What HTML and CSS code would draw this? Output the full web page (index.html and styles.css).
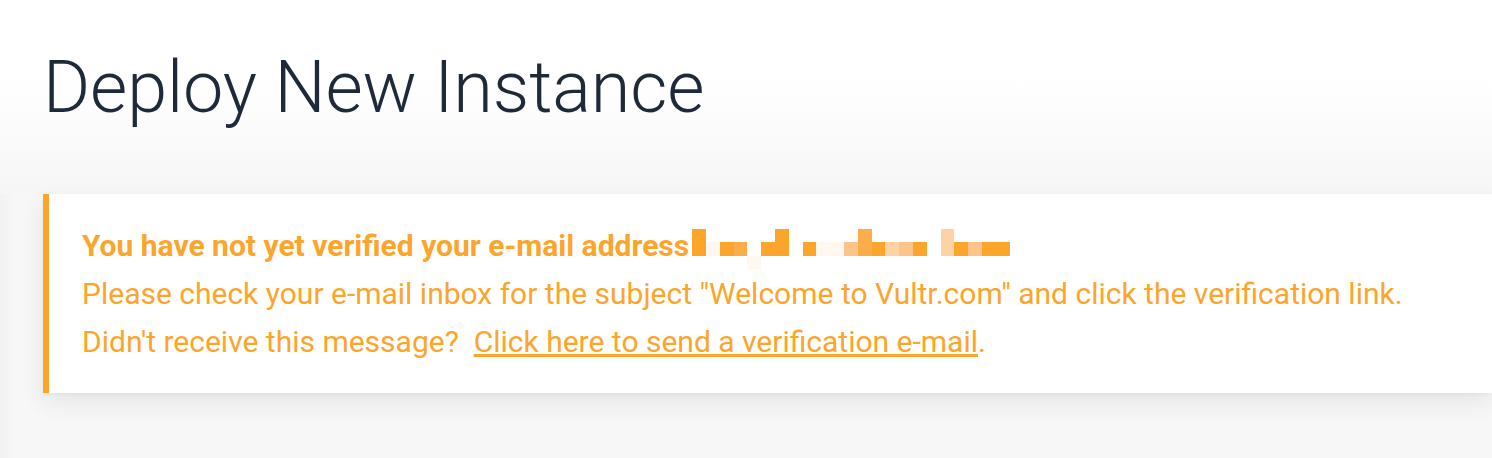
FILE: index.html
```html
<!DOCTYPE html>
<html lang="en">
<head>
<meta charset="utf-8">
<title>Deploy New Instance</title>
<link rel="stylesheet" href="styles.css">
</head>
<body>
  <header class="page-head">
    <h1 class="page-title">Deploy New Instance</h1>
  </header>
  <main class="page-body">
    <section class="notice">
      <p class="notice-line notice-strong">You have not yet verified your e-mail address<span class="mosaic" aria-hidden="true"><span class="mosaic-grid"><i class="o"></i><i></i><i></i><i></i><i></i><i></i><i class="o"></i><i></i><i></i><i></i><i></i><i></i><i class="m"></i><i></i><i></i><i></i><i></i><i></i><i class="p"></i><i></i><i></i><i></i><i></i><i class="o"></i><i class="f"></i><i class="o"></i><i class="m"></i><i></i><i class="o"></i><i class="o"></i><i></i><i class="o"></i><i class="f"></i><i class="f"></i><i class="l"></i><i class="m"></i><i class="o"></i><i class="p"></i><i class="l"></i><i class="o"></i><i></i><i class="p"></i><i class="o"></i><i class="l"></i><i class="o"></i><i class="o"></i><i></i><i></i><i></i><i></i><i class="f"></i></span></span></p>
      <p class="notice-line">Please check your e-mail inbox for the subject "Welcome to Vultr.com" and click the verification link.</p>
      <p class="notice-line">Didn't receive this message?&nbsp; <a class="notice-link" href="#">Click here to send a verification e-mail</a>.</p>
    </section>
  </main>
</body>
</html>
```

FILE: styles.css
```css
* {
  box-sizing: border-box;
}

html, body {
  margin: 0;
  padding: 0;
}

body {
  background: linear-gradient(to right, #f1f2f2 0, #f7f7f7 14px) #f7f7f7;
  font-family: Roboto, "Liberation Sans", Arial, sans-serif;
  min-height: 100vh;
  overflow: hidden;
}

.page-head {
  background: linear-gradient(to bottom, #ffffff 0%, #ffffff 40%, #f6f6f6 100%);
  padding: 46px 40px 64px 43px;
}

.page-title {
  margin: 0;
  font-size: 72px;
  font-weight: 300;
  line-height: 84px;
  color: #1e2939;
  letter-spacing: -0.1px;
}

.page-body {
  padding: 0 0 0 43px;
}

.notice {
  background: #ffffff;
  border-left: 6px solid #fba52b;
  padding: 28px 30px 27px 33px;
  box-shadow: 0 9px 22px rgba(40, 55, 55, 0.09), 0 2px 4px rgba(0, 0, 0, 0.03);
  color: #fba52b;
}

.notice-line {
  margin: 0;
  font-size: 30px;
  line-height: 48px;
  white-space: nowrap;
}

.notice-strong {
  font-weight: 700;
}

.notice-link {
  color: #fba52b;
  text-decoration: underline;
  text-decoration-thickness: 3px;
  text-underline-offset: 2px;
}

.mosaic {
  display: inline-block;
  overflow: hidden;
  vertical-align: -13px;
  margin-left: 3px;
}

.mosaic-grid {
  display: grid;
  grid-template-columns: repeat(23, 13.8px);
  grid-auto-rows: 13.4px;
}

.mosaic-grid i {
  display: block;
}

.mosaic-grid .o { background: #fba52b; }
.mosaic-grid .m { background: #fbae48; }
.mosaic-grid .l { background: #fcc488; }
.mosaic-grid .p { background: #fdd3a6; }
.mosaic-grid .f { background: #fef8f1; }
```
